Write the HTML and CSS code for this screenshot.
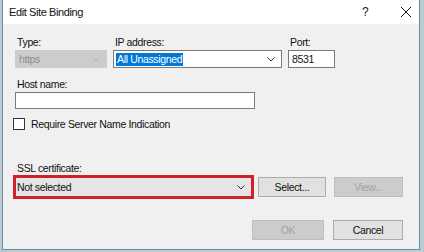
FILE: index.html
```html
<!DOCTYPE html>
<html>
<head>
<meta charset="utf-8">
<link rel="stylesheet" href="styles.css">
</head>
<body>
<div class="win">
  <div class="titlebar">
    <span class="title">Edit Site Binding</span>
    <span class="help">?</span>
    <span class="close"><svg width="12" height="12" viewBox="0 0 12 12"><path d="M1 1L11 11M11 1L1 11" stroke="#111" stroke-width="1" fill="none"/></svg></span>
  </div>
  <div class="content">
    <div class="row1">
      <div class="col type">
        <div class="label">Type:</div>
        <div class="combo disabled"><span>https</span><svg class="arrow" width="8" height="5" viewBox="0 0 8 5"><path d="M0.5 0.5L4 4L7.5 0.5" stroke="#b0b0b0" fill="none"/></svg></div>
      </div>
      <div class="col ip">
        <div class="label">IP address:</div>
        <div class="combo edit"><span class="sel">All Unassigned</span><svg class="arrow" width="8" height="5" viewBox="0 0 8 5"><path d="M0.5 0.5L4 4L7.5 0.5" stroke="#333" fill="none"/></svg></div>
      </div>
      <div class="col port">
        <div class="label">Port:</div>
        <div class="textbox small">8531</div>
      </div>
    </div>
    <div class="label host">Host name:</div>
    <div class="textbox hostbox"></div>
    <div class="check"><span class="box"></span><span>Require Server Name Indication</span></div>
    <div class="label ssl">SSL certificate:</div>
    <div class="sslrow">
      <div class="redbox"><div class="combo sslcombo"><span>Not selected</span><svg class="arrow" width="8" height="5" viewBox="0 0 8 5"><path d="M0.5 0.5L4 4L7.5 0.5" stroke="#333" fill="none"/></svg></div></div>
      <div class="btn selbtn">Select...</div>
      <div class="btn off viewbtn">View...</div>
    </div>
    <div class="footer">
      <div class="btn off okbtn">OK</div>
      <div class="btn cancel">Cancel</div>
    </div>
  </div>
</div>
</body>
</html>
```
FILE: styles.css
```css
html, body { margin: 0; padding: 0; }
body {
  background: #b9ccd6;
  font-family: "Liberation Sans", Arial, sans-serif;
  font-size: 10.5px;
  letter-spacing: -0.35px;
  color: #111;
  width: 424px;
  height: 252px;
  overflow: hidden;
}
.win {
  width: 416px;
  height: 249px;
  margin-left: 2px;
  border-left: 1px solid #6e8b97;
  border-right: 1px solid #6e8b97;
  border-bottom: 1px solid #6e8b97;
  background: #f0f0f0;
  display: flex;
  flex-direction: column;
}
.titlebar {
  height: 24px;
  background: #fff;
  display: flex;
  align-items: center;
  padding-left: 6px;
  font-size: 11px;
  letter-spacing: -0.4px;
}
.title { flex: 1; }
.help { width: 12px; margin-right: 26px; font-size: 12px; color: #222; }
.close { width: 12px; margin-right: 7px; display: flex; }
.content { padding-left: 12px; flex: 1; }
.row1 { display: flex; gap: 6px; margin-top: 11px; }
.col { display: flex; flex-direction: column; }
.label { height: 14px; line-height: 14px; margin-left: 2px; }
.type { width: 92px; }
.ip { width: 169px; }
.port { width: 47px; }
.combo {
  margin-top: 1px;
  height: 18px;
  box-sizing: border-box;
  display: flex;
  align-items: center;
  justify-content: space-between;
  padding: 0 6px 0 3px;
}
.combo.disabled { background: #cccccc; color: #8d8d8d; border: 1px solid #cccccc; }
.combo.edit { background: #fff; border: 1px solid #7a7a7a; padding-left: 2px; }
.sel { background: #0078d7; color: #fff; padding: 0 1px; line-height: 13px; }
.textbox {
  margin-top: 1px;
  height: 18px;
  box-sizing: border-box;
  background: #fff;
  border: 1px solid #7a7a7a;
  padding-left: 3px;
  line-height: 16px;
}
.hostbox { width: 240px; height: 17px; }
.host { margin-top: 9px; }
.check { display: flex; align-items: center; gap: 6px; margin-top: 9px; margin-left: -2px; height: 12px; }
.box { width: 12px; height: 12px; box-sizing: border-box; border: 1px solid #333; background: #fff; }
.ssl { margin-top: 31px; }
.sslrow { display: flex; align-items: center; }
.redbox {
  margin-left: -2px;
  width: 241px;
  height: 24px;
  box-sizing: border-box;
  border: 3px solid #d0202c;
  background: #e5e5e5;
}
.sslcombo { margin-top: 0; height: 18px; background: #e5e5e5; border: 0; padding-left: 1px; }
.btn {
  height: 20px;
  box-sizing: border-box;
  border: 1px solid #adadad;
  background: #e1e1e1;
  display: flex;
  align-items: center;
  justify-content: center;
}
.btn.off { background: #cccccc; border-color: #bfbfbf; color: #a3a3a3; }
.selbtn { width: 68px; margin-left: 4px; }
.viewbtn { width: 69px; margin-left: 8px; }
.footer { display: flex; margin-top: 21px; margin-left: 237px; }
.okbtn { width: 72px; }
.cancel { width: 70px; margin-left: 9px; }
```
